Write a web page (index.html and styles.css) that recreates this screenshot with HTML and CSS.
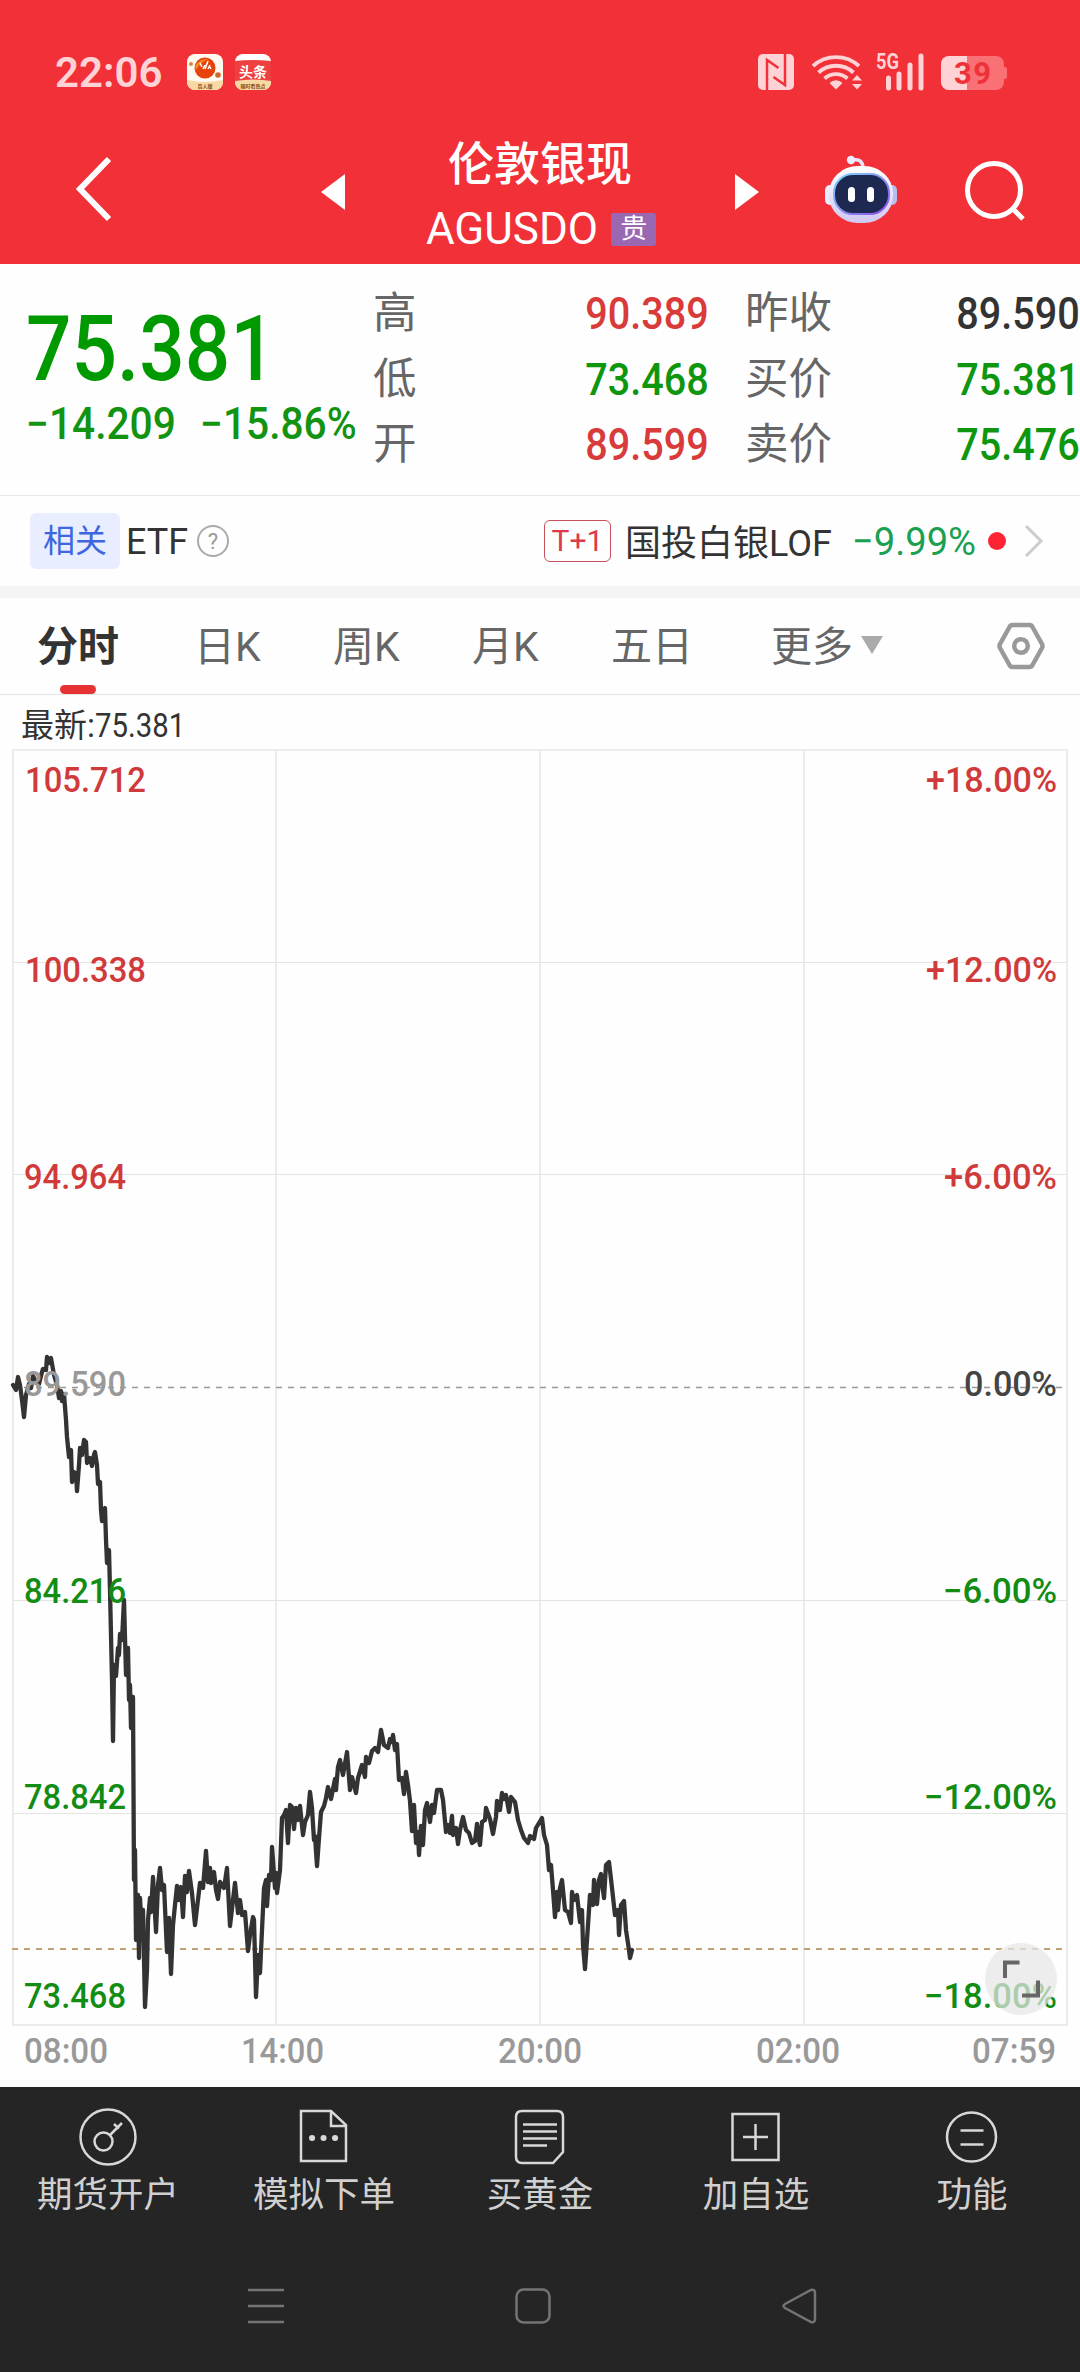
FILE: index.html
```html
<!DOCTYPE html>
<html lang="zh-CN">
<head>
    <meta charset="UTF-8">
    <meta name="viewport" content="width=device-width, initial-scale=1.0">
    <title>伦敦银现 AGUSDO</title>
    <link rel="stylesheet" href="styles.css">
</head>
<body>
    <header>
        <div class="status-bar">
            <span class="clock">22:06</span>
            <svg class="app-icon" viewBox="0 0 36 36">
                <rect width="36" height="36" rx="8" fill="#fffaf0"/>
                <path d="M0 26q18 4 36 0v2a8 8 0 0 1-8 8H8a8 8 0 0 1-8-8z" fill="#f8d9a4"/>
                <circle cx="18" cy="14" r="10.5" fill="#e8420c"/>
                <path d="M8 12q5-8 14-7-9 3-13 11z" fill="#f58a1c"/>
                <path d="M13 9l2 4M18 15l3-8M16 15l2-4M21 15l2-4M24 15l-1-2" stroke="#fff" stroke-width="1.500"/>
                <circle cx="4" cy="10" r="2" fill="#d9883e"/>
                <circle cx="31" cy="21" r="2.800" fill="#c9692b"/>
                <text x="18" y="34" text-anchor="middle" font-size="5" font-weight="700" fill="#8a4a12">百人版</text>
            </svg>
            <svg class="app-icon" viewBox="0 0 36 36">
                <rect width="36" height="36" rx="8" fill="#fff"/>
                <path d="M0 7q18-2 36 0v20H0z" fill="#ee4040"/>
                <path d="M0 27q18-3 36 0v1a8 8 0 0 1-8 8H8a8 8 0 0 1-8-8z" fill="#f8d9a4"/>
                <text x="18" y="23" text-anchor="middle" font-size="14" font-weight="700" fill="#fff">头条</text>
                <text x="18" y="34" text-anchor="middle" font-size="5" font-weight="700" fill="#8a4a12">随时看热点</text>
            </svg>
            <svg class="signals" viewBox="758 50 250 44">
                <rect x="758" y="54" width="36" height="36" rx="5" fill="#ffd3d6"/>
                <path d="M767 90V60l11.500 8M785 54v31l-11.500-8" fill="none" stroke="#f13037" stroke-width="2.500"/>
                <g fill="none" stroke="#ffd3d6" stroke-width="3.800">
                    <path d="M813 66a34 34 0 0 1 46 0M818.500 72.500a26 26 0 0 1 35 0M824.500 78.500a17.500 17.500 0 0 1 23 0"/>
                </g>
                <path d="M836 89.500l-6.500-6.500a9 9 0 0 1 13 0zM852 80.500l5-5.500 5 5.500zM852 84l5 5.500 5-5.500z" fill="#ffd3d6"/>
                <text x="876" y="69" font-size="22" font-weight="700" textLength="23" lengthAdjust="spacingAndGlyphs" fill="#ffd3d6">5G</text>
                <path d="M888.500 78v10M899 74v14M910 65v23M921 56v32" stroke="#ffd3d6" stroke-width="5" stroke-linecap="round"/>
                <rect x="941" y="56" width="63" height="34" rx="8" fill="#f97075"/>
                <path d="M967 56h-18a8 8 0 0 0-8 8v18a8 8 0 0 0 8 8h18z" fill="#ffd3d6"/>
                <rect x="1003" y="67" width="4" height="12" rx="2" fill="#f97075"/>
                <text x="954" y="84" font-size="31" font-weight="700" textLength="37" fill="#ee3238">39</text>
            </svg>
        </div>
        <div class="title-bar">
            <svg class="back" viewBox="0 0 36 66"><path d="M33 3L4 33l29 30" fill="none" stroke="#fff" stroke-width="6"/></svg>
            <svg class="prev" viewBox="0 0 24 36"><path d="M0 18L24 0v36z" fill="#fff"/></svg>
            <div class="title">
                <h1>伦敦银现</h1>
                <div class="code">AGUSDO <span class="tag">贵</span></div>
            </div>
            <svg class="next" viewBox="0 0 24 36"><path d="M24 18L0 0v36z" fill="#fff"/></svg>
            <svg class="robot" viewBox="0 0 72 70">
                <defs>
                    <linearGradient id="shell" x1="0" y1="0" x2="0" y2="1">
                        <stop offset="0" stop-color="#ffffff"/>
                        <stop offset="1" stop-color="#cfc8f2"/>
                    </linearGradient>
                    <linearGradient id="rim" x1="0" y1="0" x2="1" y2="1">
                        <stop offset="0" stop-color="#7fd6ff"/>
                        <stop offset="1" stop-color="#8a4be8"/>
                    </linearGradient>
                </defs>
                <path d="M27 5q10-2 11 7" fill="none" stroke="#e9e4fb" stroke-width="3.500"/>
                <circle cx="26" cy="5" r="4.200" fill="#f0ecff"/>
                <rect x="0" y="30" width="12" height="20" rx="5" fill="#e9ecff"/>
                <rect x="60" y="30" width="12" height="20" rx="5" fill="#b9bdf0"/>
                <rect x="4" y="11" width="64" height="57" rx="29" ry="27" fill="url(#shell)"/>
                <rect x="9" y="19" width="55" height="40" rx="19" fill="#1d2950" stroke="url(#rim)" stroke-width="2"/>
                <rect x="23" y="32" width="7" height="15" rx="3.500" fill="#fff"/>
                <rect x="42" y="32" width="7" height="15" rx="3.500" fill="#fff"/>
            </svg>
            <svg class="search" viewBox="0 0 62 62"><circle cx="29" cy="30" r="26.500" fill="none" stroke="#fff" stroke-width="5"/><path d="M47 48l11 11" stroke="#fff" stroke-width="5"/></svg>
        </div>
    </header>

    <section class="quote">
        <div class="price">
            <div class="last"><span>75.381</span></div>
            <div class="change"><span>−14.209</span><span>−15.86%</span></div>
        </div>
        <dl class="first">
            <dt>高</dt><dd class="up">90.389</dd>
            <dt>低</dt><dd class="down">73.468</dd>
            <dt>开</dt><dd class="up">89.599</dd>
        </dl>
        <dl class="second">
            <dt>昨收</dt><dd>89.590</dd>
            <dt>买价</dt><dd class="down">75.381</dd>
            <dt>卖价</dt><dd class="down">75.476</dd>
        </dl>
    </section>

    <section class="related">
        <span class="badge">相关</span>
        <span class="etf">ETF</span>
        <span class="help">?</span>
        <span class="t1">T+1</span>
        <span class="fund">国投白银LOF</span>
        <span class="fund-change">−9.99%</span>
        <span class="dot"></span>
        <svg class="more" viewBox="0 0 20 34"><path d="M2 2l15 15L2 32" fill="none" stroke="#ccc" stroke-width="3"/></svg>
    </section>

    <nav class="tabs">
        <span class="tab active">分时</span>
        <span class="tab">日K</span>
        <span class="tab">周K</span>
        <span class="tab">月K</span>
        <span class="tab">五日</span>
        <span class="tab">更多<i class="arrow"></i></span>
        <svg class="settings" viewBox="0 0 48 48"><path d="M15.500 3h17q2 0 3 2l9.500 17q1 2 0 4l-9.500 17q-1 2-3 2h-17q-2 0-3-2L3 26q-1-2 0-4l9.500-17q1-2 3-2z" fill="none" stroke="#999" stroke-width="4.500"/><circle cx="24" cy="24" r="6.800" fill="none" stroke="#999" stroke-width="4.500"/></svg>
    </nav>

    <div class="latest">最新:<span>75.381</span></div>

    <svg class="chart" viewBox="0 745 1080 1342">
        <g class="grid">
            <path d="M12 750H1068M12 2025H1068M13 750V2025M276 750V2025M540 750V2025M804 750V2025M1067 750V2025"/>
            <path class="thin" d="M13 962.500H1067M13 1174.500H1067M13 1600.500H1067M13 1813.500H1067"/>
        </g>
        <path class="zero" d="M12 1387.500H1066"/>
        <path class="now" d="M12 1949H1064"/>
        <polyline class="line" points="13,1385 16,1390 18,1377 20,1385 22,1400 24,1417 26,1395 29,1384 31,1388 33,1376 36,1382 39,1384 42,1372 43,1369 46,1370 47,1357 49,1363 51,1358 54,1375 57,1385 59,1398 61,1391 62,1401 64,1394 66,1420 67,1437 69,1457 71,1450 72,1482 74,1472 76,1474 77,1491 79,1465 80,1448 82,1455 84,1440 86,1442 87,1463 90,1458 92,1466 94,1455 95,1452 97,1465 98,1484 100,1482 101,1510 102,1521 105,1508 106,1540 107,1563 109,1550 110,1590 112,1680 113,1741 114,1665 116,1676 118,1648 119,1655 120,1634 122,1640 124,1600 126,1675 128,1648 129,1700 130,1685 131,1728 133,1697 134,1880 135,1850 136,1940 138,1895 139,1958 140,1898 142,1933 143,1910 145,2007 147,1970 148,1920 150,1898 151,1912 153,1877 156,1932 158,1885 160,1868 162,1890 164,1885 166,1930 167,1952 169,1918 171,1974 173,1925 175,1905 177,1886 179,1900 181,1887 183,1917 185,1876 187,1892 189,1871 192,1893 195,1925 197,1908 200,1883 203,1888 206,1851 208,1882 210,1868 211,1883 214,1872 216,1890 218,1899 220,1882 224,1888 227,1868 230,1926 233,1900 235,1883 238,1913 240,1900 242,1915 245,1912 248,1951 250,1935 253,1917 254,1920 256,1997 258,1955 260,1973 262,1930 264,1888 266,1880 267,1906 269,1875 271,1880 272,1847 275,1888 276,1873 277,1893 280,1870 282,1818 284,1815 286,1810 288,1843 290,1805 292,1807 294,1829 296,1808 298,1820 300,1806 303,1835 305,1822 308,1815 310,1792 312,1808 314,1840 315,1836 317,1866 319,1838 321,1812 324,1806 326,1798 328,1787 331,1799 333,1789 335,1779 336,1790 338,1767 340,1760 343,1775 347,1752 350,1790 352,1777 356,1793 358,1778 362,1765 365,1777 366,1757 369,1763 372,1751 375,1748 378,1752 381,1730 384,1745 388,1748 390,1739 392,1742 393,1735 395,1750 397,1744 399,1780 402,1778 404,1794 406,1772 408,1785 410,1801 412,1831 414,1805 416,1843 418,1832 419,1855 421,1826 423,1845 425,1810 427,1803 430,1822 432,1805 434,1813 437,1790 441,1790 443,1800 446,1832 448,1825 450,1833 452,1816 453,1835 456,1828 458,1844 460,1830 463,1817 466,1830 469,1833 472,1843 475,1841 477,1824 479,1840 480,1845 482,1822 485,1820 486,1808 490,1819 493,1834 496,1817 497,1801 500,1810 502,1793 504,1799 506,1795 509,1812 511,1797 515,1802 518,1820 521,1830 524,1838 528,1843 530,1836 534,1839 536,1828 542,1818 544,1835 547,1845 549,1870 551,1865 553,1890 555,1917 557,1892 558,1910 560,1888 562,1880 565,1910 568,1912 571,1923 572,1892 574,1900 577,1895 580,1922 582,1910 583,1945 585,1969 587,1940 590,1895 593,1905 594,1880 597,1904 599,1880 601,1874 604,1898 606,1865 609,1862 612,1888 615,1915 618,1910 619,1935 621,1905 624,1901 626,1930 629,1950 630,1958 632,1950"/>
        <g class="labels">
            <text class="up" x="25" y="792" textLength="121" lengthAdjust="spacingAndGlyphs">105.712</text>
            <text class="up" x="25" y="982" textLength="121" lengthAdjust="spacingAndGlyphs">100.338</text>
            <text class="up" x="24" y="1189" textLength="102" lengthAdjust="spacingAndGlyphs">94.964</text>
            <text class="muted" x="24" y="1396" textLength="102" lengthAdjust="spacingAndGlyphs">89.590</text>
            <text class="down" x="24" y="1603" textLength="102" lengthAdjust="spacingAndGlyphs">84.216</text>
            <text class="down" x="24" y="1809" textLength="102" lengthAdjust="spacingAndGlyphs">78.842</text>
            <text class="down" x="24" y="2008" textLength="102" lengthAdjust="spacingAndGlyphs">73.468</text>
        </g>
        <g class="labels">
            <text class="up" x="926" y="792" textLength="131" lengthAdjust="spacingAndGlyphs">+18.00%</text>
            <text class="up" x="926" y="982" textLength="131" lengthAdjust="spacingAndGlyphs">+12.00%</text>
            <text class="up" x="944" y="1189" textLength="113" lengthAdjust="spacingAndGlyphs">+6.00%</text>
            <text x="964" y="1396" textLength="93" lengthAdjust="spacingAndGlyphs">0.00%</text>
            <text class="down" x="943" y="1603" textLength="114" lengthAdjust="spacingAndGlyphs">−6.00%</text>
            <text class="down" x="924" y="1809" textLength="133" lengthAdjust="spacingAndGlyphs">−12.00%</text>
            <text class="down" x="924" y="2008" textLength="133" lengthAdjust="spacingAndGlyphs">−18.00%</text>
        </g>
        <g class="labels time">
            <text x="24" y="2063" textLength="84" lengthAdjust="spacingAndGlyphs">08:00</text>
            <text x="241" y="2063" textLength="83" lengthAdjust="spacingAndGlyphs">14:00</text>
            <text x="498" y="2063" textLength="84" lengthAdjust="spacingAndGlyphs">20:00</text>
            <text x="756" y="2063" textLength="84" lengthAdjust="spacingAndGlyphs">02:00</text>
            <text x="972" y="2063" textLength="84" lengthAdjust="spacingAndGlyphs">07:59</text>
        </g>
        <circle cx="1021" cy="1979" r="36" fill="#e6e6e6" fill-opacity="0.72"/>
        <path d="M1019.500 1962.500H1005V1978M1038 1980.500V1995.500H1022" fill="none" stroke="#666" stroke-width="4"/>
    </svg>

    <footer>
        <div class="actions">
            <div class="action">
                <svg viewBox="0 0 60 60"><circle cx="30" cy="30" r="27.500"/><circle cx="25.500" cy="34.500" r="9"/><path d="M32 28l12-12M36 17l5 4.500"/></svg>
                <span>期货开户</span>
            </div>
            <div class="action">
                <svg viewBox="0 0 60 60"><path d="M7 4h30l15 14v36H7zM37 4v15h15"/><path d="M18 31h.1M29.500 31h.1M41 31h.1" stroke-width="6" stroke-linecap="round"/></svg>
                <span>模拟下单</span>
            </div>
            <div class="action">
                <svg viewBox="0 0 60 60"><path d="M12 4h35q6 0 6 6v35L43 56H12q-6 0-6-6V10q0-6 6-6zM13 17.500h34M13 24.500h34M13 31.500h34M13 38.500h24"/></svg>
                <span>买黄金</span>
            </div>
            <div class="action">
                <svg viewBox="0 0 60 60"><path d="M6.500 7h46v46h-46zM17 30h25M29.500 17v26"/></svg>
                <span>加自选</span>
            </div>
            <div class="action">
                <svg viewBox="0 0 60 60"><circle cx="29.500" cy="30" r="24.500"/><path d="M18.500 23.500h23M18.500 37.500h23"/></svg>
                <span>功能</span>
            </div>
        </div>
        <div class="system-nav">
            <svg viewBox="0 0 36 36"><path d="M0 2h36M0 18h36M0 34h36"/></svg>
            <svg viewBox="0 0 36 36"><rect x="1.500" y="1.500" width="33" height="33" rx="7"/></svg>
            <svg viewBox="0 0 36 36"><path d="M3 16L29 2q4-1 4 3v26q0 4-4 3L3 20q-3-2 0-4z"/></svg>
        </div>
    </footer>
</body>
</html>
```
FILE: styles.css
```css
* {
    box-sizing: border-box;
}
body {
    margin: 0;
    width: 1080px;
    height: 2372px;
    overflow: hidden;
    background-color: #fefefe;
    color: #333;
    font-family: Roboto, "Noto Sans CJK SC", sans-serif;
}
svg {
    display: block;
    flex: none;
}
span {
    white-space: nowrap;
}
.up {
    color: #d93a3a;
}
.down {
    color: #0f960f;
}

/* Cabecera roja */
header {
    height: 264px;
    background-color: #f13037;
    color: #fff;
}
.status-bar {
    display: flex;
    align-items: center;
    height: 144px;
    padding-left: 55px;
}
.clock {
    width: 132px;
    color: #ffd3d6;
    font-size: 42px;
    font-weight: 600;
}
.app-icon {
    width: 36px;
    height: 36px;
    margin-right: 12px;
}
.signals {
    width: 250px;
    height: 44px;
    margin-left: 475px;
}
.title-bar {
    display: flex;
    align-items: flex-start;
    height: 120px;
    padding-left: 76px;
}
.back {
    width: 36px;
    height: 66px;
    margin-top: 12px;
}
.prev, .next {
    width: 24px;
    height: 36px;
    margin-top: 30px;
}
.prev {
    margin-left: 209px;
}
.title {
    width: 390px;
    margin-top: -7px;
    text-align: center;
}
h1 {
    margin: 0;
    font-size: 46px;
    font-weight: 500;
    line-height: 54px;
}
.code {
    display: flex;
    align-items: center;
    justify-content: center;
    gap: 13px;
    height: 66px;
    margin-top: 5px;
    padding-left: 2px;
    font-size: 44px;
    line-height: 66px;
}
.tag {
    width: 45px;
    height: 33px;
    border-radius: 3px;
    background-color: #9a67b3;
    font-size: 27px;
    line-height: 32px;
}
.robot {
    width: 72px;
    height: 70px;
    margin: 11px 0 0 66px;
}
.search {
    width: 62px;
    height: 62px;
    margin: 16px 0 0 68px;
}

/* Precio y datos */
.quote {
    display: flex;
    height: 232px;
    border-bottom: 1px solid #e8e8e8;
    line-height: 66px;
}
.price {
    width: 373px;
    padding: 43px 0 0 26px;
}
.last {
    height: 84px;
    color: #009900;
    font-size: 90px;
    font-weight: 500;
    line-height: 86px;
}
.last span, .change span, .latest span {
    display: inline-block;
    transform: scaleX(0.89);
    transform-origin: left;
}
.change {
    display: flex;
    color: #129312;
    font-size: 44px;
    font-weight: 500;
}
.change span {
    width: 174px;
    transform: scaleX(0.925);
}
dl {
    display: grid;
    grid-template-columns: auto auto;
    grid-auto-rows: 65.5px;
    justify-content: space-between;
    margin: 0;
    padding-top: 17px;
}
.first {
    width: 336px;
}
.second {
    width: 335px;
    margin-left: 36px;
}
dt {
    color: #666;
    font-size: 43.5px;
}
dd {
    margin: 0;
    font-size: 44.5px;
    font-weight: 500;
    transform: scaleX(0.89);
    transform-origin: right;
}

/* ETF relacionado */
.related {
    display: flex;
    align-items: center;
    height: 90px;
    padding-left: 30px;
    font-size: 35px;
}
.badge {
    width: 90px;
    height: 56px;
    border-radius: 6px;
    background-color: #e8eeff;
    color: #3d66e0;
    font-size: 32px;
    line-height: 57px;
    text-align: center;
}
.etf {
    width: 77px;
    padding-top: 2px;
    padding-left: 6px;
    font-size: 36px;
}
.help {
    width: 32px;
    height: 32px;
    border: 2px solid #aaa;
    border-radius: 50%;
    color: #999;
    font-size: 22px;
    line-height: 29px;
    text-align: center;
}
.t1 {
    width: 67px;
    height: 42px;
    margin-left: 315px;
    border: 1.5px solid #c4505a;
    border-radius: 6px;
    color: #e0394a;
    font-size: 30px;
    line-height: 39px;
    text-align: center;
}
.fund {
    width: 241px;
    padding-bottom: 3px;
    padding-left: 14px;
    font-size: 36px;
}
.fund-change {
    width: 136px;
    color: #1aa052;
    font-size: 39.5px;
    transform: scaleX(0.965);
    transform-origin: left;
}
.dot {
    width: 18px;
    height: 18px;
    border-radius: 50%;
    background-color: #ff2433;
}
.more {
    width: 20px;
    height: 34px;
    margin-left: 18px;
}

/* Pestañas */
.tabs {
    display: flex;
    align-items: center;
    height: 109px;
    padding-left: 37px;
    border-top: 12px solid #f4f4f4;
    border-bottom: 1px solid #e4e4e4;
    color: #666;
    font-size: 41px;
}
.tab {
    position: relative;
    width: 139px;
    height: 96px;
    line-height: 99px;
}
.tab:first-child {
    width: 157px;
}
.tab:nth-child(5) {
    width: 160px;
}
.tab:nth-child(6) {
    width: 226px;
}
.tab.active {
    color: #333;
    font-weight: 700;
}
.tab.active::after {
    content: "";
    position: absolute;
    left: 23px;
    bottom: 0;
    width: 36px;
    height: 9px;
    border-radius: 5px;
    background-color: #e63232;
}
.arrow {
    display: inline-block;
    margin-left: 8px;
    border: 11px solid transparent;
    border-top: 18px solid #aaa;
    border-bottom: 0;
    vertical-align: 7px;
}
.settings {
    width: 48px;
    height: 48px;
}

/* Gráfico */
.latest {
    height: 50px;
    padding-left: 21px;
    font-size: 33px;
    line-height: 61px;
}
.chart {
    width: 1080px;
    height: 1342px;
}
.grid {
    fill: none;
    stroke: #ececec;
    stroke-width: 2;
}
.thin {
    stroke: #e4e4e4;
    stroke-width: 1;
}
.zero {
    stroke: #999;
    stroke-width: 1.5;
    stroke-dasharray: 6 4;
}
.now {
    stroke: #c0a274;
    stroke-width: 2;
    stroke-dasharray: 6 6;
}
.zero {
    stroke-dasharray: 6 6;
}
.line {
    fill: none;
    stroke: #333;
    stroke-width: 4.3;
    stroke-linecap: round;
    stroke-linejoin: round;
}
.labels {
    fill: #444;
    font-size: 35px;
    font-weight: 500;
}
.labels .up {
    fill: #d03a3a;
}
.labels .down {
    fill: #128c12;
}
.labels .muted, .time {
    fill: #999;
}

/* Barra inferior */
footer {
    height: 285px;
    background-color: #252525;
    color: #d0d0d0;
}
.actions {
    display: grid;
    grid-template-columns: repeat(5, 216px);
    height: 182px;
    padding-top: 20px;
    font-size: 35.5px;
    line-height: 57px;
}
.action {
    display: flex;
    flex-direction: column;
    align-items: center;
}
.action svg {
    width: 60px;
    height: 60px;
    fill: none;
    stroke: #d8d8d8;
    stroke-width: 2.5;
}
.system-nav {
    display: flex;
    gap: 231px;
    padding: 19px 0 0 248px;
}
.system-nav svg {
    width: 36px;
    height: 36px;
    fill: none;
    stroke: #747474;
    stroke-width: 2.5;
}
```
